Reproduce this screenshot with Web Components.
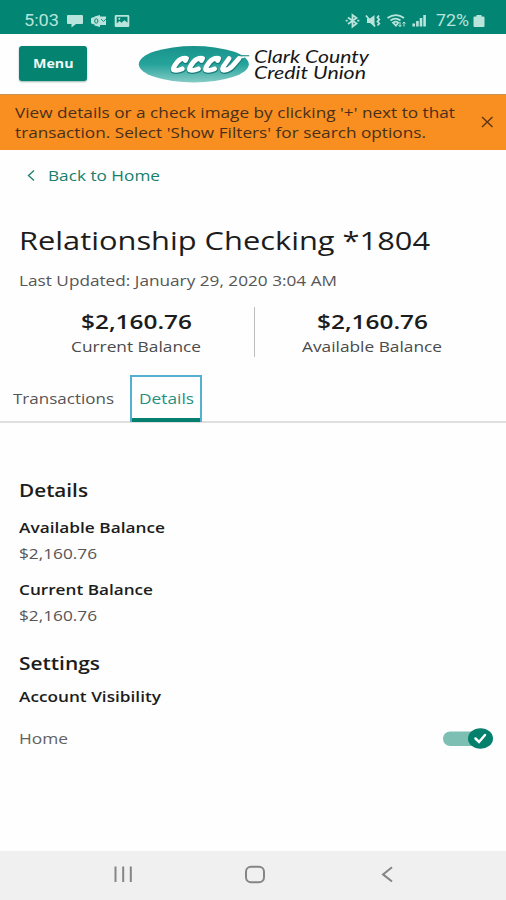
<!DOCTYPE html>
<html lang="en">
<head>
<meta charset="utf-8">
<title>Clark County Credit Union</title>
<style>
html,body{margin:0;height:100%;background:#fefefe}
body{font-family:"Open Sans","Noto Sans",sans-serif;color:#1c1c1c;overflow:hidden}
</style>
</head>
<body>
<account-screen></account-screen>
<script>
const define = (name, html, setup) => customElements.define(name, class extends HTMLElement {
  connectedCallback() {
    if (this.shadowRoot) return;
    const t = document.createElement('template');
    t.innerHTML = html;
    this.attachShadow({mode: 'open'}).append(t.content.cloneNode(true));
    if (setup) setup(this, this.shadowRoot);
  }
});

/* One line of text in wide letterforms, scaled to the width given in "w". */
define('wide-text', `<style>
:host{display:block;height:var(--lh,20px);line-height:var(--lh,20px);font-size:14.4px;flex:none}
span{display:inline-block;white-space:nowrap;transform-origin:0 0}
</style><span><slot></slot></span>`, (host, root) => {
  const span = root.querySelector('span');
  const w = +host.getAttribute('w');
  if (host.hasAttribute('size')) host.style.fontSize = host.getAttribute('size') + 'px';
  if (host.hasAttribute('weight')) host.style.fontWeight = host.getAttribute('weight');
  host.style.width = w + 'px';
  span.style.transform = `scaleX(${w / span.getBoundingClientRect().width})`;
});

define('status-bar', `<style>
:host{display:flex;box-sizing:border-box;height:34px;background:#038573;color:#b9e4dc;padding:11px 0 0 24px;font-family:Roboto,sans-serif}
svg{display:block;flex:none}
.right{display:flex;margin-left:auto;padding-right:20px}
</style>
<wide-text w="35" size="16">5:03</wide-text>
<svg width="74" height="20" viewBox="59 11 74 20" fill="currentColor">
<path d="M68 15h14q1 0 1 1v7q0 1-1 1h-6l-4.500 3.500V24H68q-1 0-1-1v-7q0-1 1-1z"/>
<path d="M94.500 16.500 100 15v1.500h6v8.500h-6v2l-5.500-1.500v-1.200H93l-2-1v-5l2-1h1.500z"/>
<g fill="none" stroke="#038573"><ellipse cx="96.300" cy="21" rx="1.600" ry="2.200"/><path d="m101 19 2.500 2.500L106 19" stroke-width=".9"/></g>
<path fill-rule="evenodd" d="M116 15h12q1.300 0 1.300 1.300v9.400q0 1.300-1.300 1.300h-12q-1.300 0-1.300-1.300v-9.400q0-1.300 1.300-1.300zm.700 1.800v6.800l2.800-2.600 2 1.700 3-2.500 3 2.500v-5.900z"/><circle cx="119.300" cy="18.800" r="1"/>
</svg>
<div class="right">
<svg width="91" height="20" viewBox="345 11 91 20" fill="none" stroke="currentColor" stroke-width="1.800">
<path d="m348 17.500 8.500 6-4 3.200V15l4 3-8.500 6M345.700 20.700h2M357.300 20.700h2"/>
<path d="M367 18.500h3l4.500-3.500v11.500L370 23h-3z" fill="currentColor" stroke="none"/><path d="m366 15.500 9 11M379 15.500l-1.500 2 1.800 2-1.800 2 1.800 2-1.800 2"/>
<path d="M387.500 18q8.500-5.800 16.500 0M390.500 20.400q5-3.400 10 0M393 22.700q2.800-2 5.200 0l-2.200 3z"/><path d="M400 22v4.500m-1.500-1.500 1.500 1.700 1.500-1.700M404 26.500V22m-1.500 1.500 1.500-1.500 1.500 1.500" stroke-width="1"/>
<path d="M413.700 26.500v-3M417.400 26.500v-5.500M421 26.500v-8.500M424.600 26.500V15" stroke-width="2.600"/>
</svg>
<wide-text w="33" size="16">72%</wide-text>
<svg width="17" height="20" viewBox="469 11 17 20" fill="currentColor"><path d="M476.500 15h5v1.500h2q1 0 1 1V26q0 1-1 1h-9q-1 0-1-1v-8.500q0-1 1-1h2z"/></svg>
</div>`);

define('menu-button', `<style>
:host{display:block;box-sizing:border-box;width:68px;height:35px;padding:6.700px 0 0 14px;border-radius:3px;background:#048370;color:#edf9f6;box-shadow:0 1px 2px #0b4a4166}
</style><wide-text w="40.500" size="13" weight="700">Menu</wide-text>`);

define('brand-logo', `<style>
:host{display:flex;color:#161616;font-family:Lato,sans-serif;font-style:italic}
svg{display:block}
.name{--lh:15.500px;padding:5px 0 0 4px}
</style>
<svg width="112" height="40" viewBox="138 44 112 40">
<defs><linearGradient id="g" x1="0" y1="0" x2="0" y2="1"><stop offset="0" stop-color="#18938b"/><stop offset=".5" stop-color="#25a39b"/><stop offset="1" stop-color="#84cbc5"/></linearGradient></defs>
<ellipse cx="193.800" cy="64.200" rx="55" ry="18.200" fill="url(#g)"/>
<g fill="none" stroke-linecap="round" stroke-linejoin="round" transform="translate(-7 0) scale(1.040 1)">
<path stroke="#1a7f7b" stroke-width="6" transform="translate(.2 .7)" d="m185 60.500 1-2.200q-5-.8-8.800 3.700-4.500 6-3.700 7.800 3 1.400 8.500-1M200.500 60.500l1-2.200q-5-.8-8.800 3.700-4.500 6-3.700 7.800 3 1.400 8.500-1M216 60.500l1-2.200q-5-.8-8.800 3.700-4.500 6-3.700 7.800 3 1.400 8.500-1M227 58.500l-5.500 8q-2 3.800 1 3.800 5-.8 8-4.500l6-7.300"/>
<path stroke="#fff" stroke-width="4.700" d="m185 60.500 1-2.200q-5-.8-8.800 3.700-4.500 6-3.700 7.800 3 1.400 8.500-1M200.500 60.500l1-2.200q-5-.8-8.800 3.700-4.500 6-3.700 7.800 3 1.400 8.500-1M216 60.500l1-2.200q-5-.8-8.800 3.700-4.500 6-3.700 7.800 3 1.400 8.500-1M227 58.500l-5.500 8q-2 3.800 1 3.800 5-.8 8-4.500l6-7.300"/>
<path stroke="#fff" stroke-width="2" d="m237 57.500 4-.6"/><path stroke="#1a7f7b" stroke-width="1" d="M239 55.700h7"/>
</g></svg>
<div class="name"><wide-text w="115" size="17.500">Clark County</wide-text><wide-text w="112" size="17.500">Credit Union</wide-text></div>`);

define('app-header', `<style>
:host{display:flex;box-sizing:border-box;height:60px;padding:12px 0 0 19px;gap:51px}
brand-logo{margin-top:-2px}
</style><menu-button></menu-button><brand-logo></brand-logo>`);

define('notice-banner', `<style>
:host{display:flex;box-sizing:border-box;height:56px;padding:8px 12px 0 15px;background:#f88f20;border-top:1px solid #c99355;color:#49301c}
svg{margin:12px 0 0 auto}
</style>
<div><slot></slot></div>
<svg width="14" height="14" viewBox="0 0 14 14" fill="none" stroke="#5c3515" stroke-width="1.400"><path d="m2 2 10.500 10M12.500 2 2 12"/></svg>`);

define('back-link', `<style>
:host{display:flex;padding:16px 0 0 27px;color:#17806c}
svg{margin:3px 13px 0 0}
</style>
<svg width="8" height="13" viewBox="0 0 8 13" fill="none" stroke="currentColor" stroke-width="1.300"><path d="M7 1.500 1.500 6.500 7 11.500"/></svg>
<slot></slot>`);

define('balance-summary', `<style>
:host{display:grid;grid-template-columns:254px 1px 1fr;margin-top:16px;height:50px}
.cell{display:flex;flex-direction:column;align-items:center;padding-top:5px}
.first{padding-left:18px}.last{padding-right:17px}
i{background:#bcbcbc;width:1px}
</style>
<div class="cell first"><slot name="current"></slot></div><i></i><div class="cell last"><slot name="available"></slot></div>`);

define('balance-figure', `<style>
:host{display:flex;flex-direction:column;align-items:center;gap:5px}
.label{color:#4b4b4b}
</style><wide-text w="111" size="20" weight="600"><slot></slot></wide-text><div class="label"><slot name="label"></slot></div>`);

define('tab-bar', `<style>
:host{display:flex;box-sizing:border-box;height:48px;margin-top:18px;padding-left:13px;border-bottom:2px solid #dfdfdf;color:#555}
.tab{padding-top:13.500px}
.active{box-sizing:border-box;width:72px;height:47px;margin-left:16px;border:2px solid #54afd0;border-bottom:0;padding:11.500px 0 0 6.500px;color:#259080;box-shadow:inset 0 -4px #06806e}
</style><div class="tab"><wide-text w="101">Transactions</wide-text></div><div class="active"><wide-text w="55">Details</wide-text></div>`);

define('detail-item', `<style>
:host{display:flex;flex-direction:column;gap:6px;color:#565656}
.term{color:#1c1c1c}
</style><div class="term"><slot name="term"></slot></div><slot></slot>`);

define('toggle-switch', `<style>
:host{display:block}svg{display:block}
</style><svg width="52" height="24" viewBox="442 726.500 52 24"><rect x="443" y="731" width="45" height="14.500" rx="7.200" fill="#7dbfb3"/><ellipse cx="480.500" cy="738" rx="12.500" ry="10.200" fill="#04806c"/><path d="m475.500 738 3.500 3.500 6-7" fill="none" stroke="#fff" stroke-width="2.500" stroke-linecap="round"/></svg>`);

define('nav-bar', `<style>
:host{display:block;margin-top:auto;height:49px;background:#f0f0f0}svg{display:block}
</style><svg width="506" height="49" viewBox="0 851 506 49" fill="none" stroke="#858585" stroke-width="2"><path d="M115.500 866.500v15.500M123.200 866.500v15.500M130.800 866.500v15.500"/><rect x="246" y="866.700" width="18" height="15.600" rx="5"/><path d="m392 867.300-9 7.100 9 7.100"/></svg>`);

define('account-screen', `<style>
:host{display:flex;flex-direction:column;width:506px;height:900px;background:#fefefe}
.summary{padding:39px 0 0 19px}
.title{--lh:30px}
.updated{margin-top:16px;color:#565656}
.details{padding:57px 0 0 19px}
.h{margin-bottom:18px}
detail-item+detail-item{margin-top:16px}
.settings{margin:27px 0 14px}
.row{display:flex;align-items:center;justify-content:space-between;padding-right:12px;margin-top:20px;color:#626262}
</style>
<status-bar></status-bar>
<app-header></app-header>
<notice-banner><wide-text w="440">View details or a check image by clicking '+' next to that</wide-text><wide-text w="411">transaction. Select 'Show Filters' for search options.</wide-text></notice-banner>
<back-link><wide-text w="112">Back to Home</wide-text></back-link>
<div class="summary">
<wide-text class="title" w="411" size="25">Relationship Checking *1804</wide-text>
<wide-text class="updated" w="318">Last Updated: January 29, 2020 3:04 AM</wide-text>
</div>
<balance-summary>
<balance-figure slot="current">$2,160.76<wide-text slot="label" w="130">Current Balance</wide-text></balance-figure>
<balance-figure slot="available">$2,160.76<wide-text slot="label" w="140">Available Balance</wide-text></balance-figure>
</balance-summary>
<tab-bar></tab-bar>
<div class="details">
<wide-text class="h" w="69" size="18" weight="600">Details</wide-text>
<detail-item><wide-text slot="term" w="146" weight="600">Available Balance</wide-text><wide-text w="78">$2,160.76</wide-text></detail-item>
<detail-item><wide-text slot="term" w="134" weight="600">Current Balance</wide-text><wide-text w="78">$2,160.76</wide-text></detail-item>
<wide-text class="settings" w="81" size="18" weight="600">Settings</wide-text>
<wide-text w="142" weight="600">Account Visibility</wide-text>
<div class="row"><wide-text w="49">Home</wide-text><toggle-switch></toggle-switch></div>
</div>
<nav-bar></nav-bar>`);
</script>
</body>
</html>
